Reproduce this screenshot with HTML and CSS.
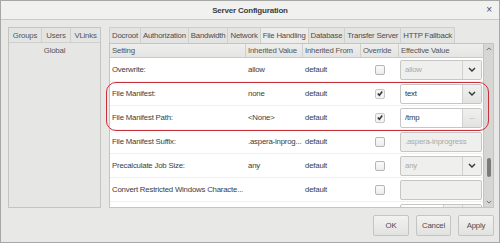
FILE: index.html
```html
<!DOCTYPE html>
<html lang="en">
<head>
    <meta charset="UTF-8">
    <title>Server Configuration</title>
    <link rel="stylesheet" href="styles.css">
</head>
<body>
    <div class="window">
        <div class="titlebar">
            <span class="title">Server Configuration</span>
            <span class="close">&times;</span>
        </div>

        <div class="content">
            <div class="users-panel">
                <div class="users-head">
                    <span class="uh-groups">Groups</span>
                    <span class="uh-users">Users</span>
                    <span class="uh-vlinks">VLinks</span>
                </div>
                <div class="users-item">Global</div>
            </div>

            <div class="settings">
                <div class="tabs">
                    <span class="tab">Docroot</span>
                    <span class="tab">Authorization</span>
                    <span class="tab">Bandwidth</span>
                    <span class="tab">Network</span>
                    <span class="tab active">File Handling</span>
                    <span class="tab">Database</span>
                    <span class="tab">Transfer Server</span>
                    <span class="tab">HTTP Fallback</span>
                </div>

                <div class="table-wrap">
                    <div class="table">
                        <div class="row head">
                            <span>Setting</span>
                            <span>Inherited Value</span>
                            <span>Inherited From</span>
                            <span>Override</span>
                            <span>Effective Value</span>
                        </div>

                        <div class="body">
                            <div class="row">
                                <span>Overwrite:</span>
                                <span>allow</span>
                                <span>default</span>
                                <span class="check"><i class="box"></i></span>
                                <span class="value">
                                    <span class="combo disabled"><span class="field">allow</span><span class="drop"><svg viewBox="0 0 8 5"><path d="M1 1l3 3 3-3"/></svg></span></span>
                                </span>
                            </div>
                            <div class="row">
                                <span>File Manifest:</span>
                                <span>none</span>
                                <span>default</span>
                                <span class="check"><i class="box on"><svg viewBox="0 0 10 10"><path d="M2.2 5l2 2.2L7.8 2.6"/></svg></i></span>
                                <span class="value">
                                    <span class="combo"><span class="field">text</span><span class="drop"><svg viewBox="0 0 8 5"><path d="M1 1l3 3 3-3"/></svg></span></span>
                                </span>
                            </div>
                            <div class="row">
                                <span>File Manifest Path:</span>
                                <span>&lt;None&gt;</span>
                                <span>default</span>
                                <span class="check"><i class="box on"><svg viewBox="0 0 10 10"><path d="M2.2 5l2 2.2L7.8 2.6"/></svg></i></span>
                                <span class="value">
                                    <span class="combo"><span class="field">/tmp</span><span class="drop browse">...</span></span>
                                </span>
                            </div>
                            <div class="row">
                                <span>File Manifest Suffix:</span>
                                <span>.aspera-inprog...</span>
                                <span>default</span>
                                <span class="check"><i class="box"></i></span>
                                <span class="value">
                                    <span class="combo disabled"><span class="field">.aspera-inprogress</span></span>
                                </span>
                            </div>
                            <div class="row">
                                <span>Precalculate Job Size:</span>
                                <span>any</span>
                                <span>default</span>
                                <span class="check"><i class="box"></i></span>
                                <span class="value">
                                    <span class="combo disabled"><span class="field">any</span><span class="drop"><svg viewBox="0 0 8 5"><path d="M1 1l3 3 3-3"/></svg></span></span>
                                </span>
                            </div>
                            <div class="row">
                                <span>Convert Restricted Windows Characte...</span>
                                <span></span>
                                <span>default</span>
                                <span class="check"><i class="box"></i></span>
                                <span class="value">
                                    <span class="combo disabled"><span class="field"></span></span>
                                </span>
                            </div>
                            <div class="row">
                                <span></span>
                                <span></span>
                                <span></span>
                                <span></span>
                                <span class="value">
                                    <span class="combo"><span class="field"></span><span class="drop"></span><span class="drop"></span></span>
                                </span>
                            </div>
                        </div>
                    </div>

                    <div class="scrollbar">
                        <span class="arrow"><svg viewBox="0 0 8 5"><path d="M1 4l3-3 3 3"/></svg></span>
                        <span class="track"><span class="thumb"></span></span>
                        <span class="arrow"><svg viewBox="0 0 8 5"><path d="M1 1l3 3 3-3"/></svg></span>
                    </div>

                    <div class="highlight"></div>
                </div>
            </div>
        </div>

        <div class="buttons">
            <button class="btn ok">OK</button>
            <button class="btn">Cancel</button>
            <button class="btn">Apply</button>
        </div>
    </div>
</body>
</html>
```

FILE: styles.css
```css
* {
    margin: 0;
    padding: 0;
    box-sizing: border-box;
}

body {
    font-family: "Liberation Sans", Arial, sans-serif;
    font-size: 7.8px;
    letter-spacing: -0.2px;
    color: #3a3d3e;
    background: #e8e8e7;
}

.window {
    width: 500px;
    height: 243px;
    border: 1px solid #a7a7a5;
    background: #e8e8e7;
    display: flex;
    flex-direction: column;
    overflow: hidden;
}

.titlebar {
    height: 19px;
    flex: none;
    background: #f1f1f0;
    border-bottom: 1px solid #c9c9c7;
    display: flex;
    align-items: center;
    justify-content: center;
    position: relative;
}

.title {
    font-size: 8px;
    font-weight: bold;
    color: #3b3e3f;
}

.close {
    position: absolute;
    right: 7px;
    top: 3px;
    font-size: 10px;
    color: #4a4d4e;
}

.content {
    display: flex;
    gap: 8px;
    padding: 7px 5px 0 7px;
    height: 188px;
    flex: none;
}

.users-panel {
    width: 93px;
    border: 1px solid #c4c4c2;
    background: #e6e6e5;
    display: flex;
    flex-direction: column;
}

.users-head {
    display: flex;
    height: 15px;
    border-bottom: 1px solid #cfcfcd;
    background: #e4e4e3;
}

.users-head span {
    display: flex;
    align-items: center;
    justify-content: center;
    color: #555;
    border-right: 1px solid #cfcfcd;
}

.uh-groups { width: 33px; }
.uh-users { width: 29px; }
.uh-vlinks { width: 29px; border-right: none !important; }

.users-item {
    text-align: center;
    color: #555;
    padding-top: 3px;
}

.settings {
    flex: 1;
    display: flex;
    flex-direction: column;
    min-width: 0;
}

.tabs {
    display: flex;
    height: 16px;
    flex: none;
}

.tab {
    display: flex;
    align-items: center;
    padding: 0 2px;
    white-space: nowrap;
    border: 1px solid #cfcfcd;
    border-right: none;
    border-bottom: none;
    background: #e3e3e2;
    color: #4a4d4e;
}

.tab:last-child {
    border-right: 1px solid #cfcfcd;
}

.tab.active {
    background: #ececeb;
}

.table-wrap {
    height: 165px;
    flex: none;
    display: flex;
    border: 1px solid #c4c4c2;
    position: relative;
}

.table {
    flex: 1;
    display: flex;
    flex-direction: column;
    background: #fff;
    overflow: hidden;
    min-height: 0;
}

.row {
    display: grid;
    grid-template-columns: 136px 57px 58px 38px 84px;
    height: 24px;
    flex: none;
    border-bottom: 1px solid #f0f0f0;
}

.row > span {
    display: flex;
    align-items: center;
    padding-left: 2px;
    white-space: nowrap;
    overflow: hidden;
}

.row.head {
    height: 14px;
    background: linear-gradient(#eeeeed, #e4e4e3);
    border-bottom: 1px solid #c9c9c7;
}

.row.head > span {
    border-right: 1px solid #cfcfcd;
    color: #555;
}

.row.head > span:last-child {
    border-right: none;
}

.body {
    flex: 1;
    min-height: 0;
    overflow: hidden;
}

.row > .check {
    justify-content: center;
    padding-left: 0;
}

.box {
    width: 10px;
    height: 10px;
    border: 1px solid #b5b5b3;
    border-radius: 2px;
    background: linear-gradient(#fbfbfb, #ededec);
    display: flex;
    align-items: center;
    justify-content: center;
}

.box.on {
    border-color: #c8c8c6;
    background: #f3f3f2;
}

.box svg {
    width: 9px;
    height: 9px;
    fill: none;
    stroke: #2e3436;
    stroke-width: 1.9;
}

.row > .value {
    padding: 0 1px 0 1px;
}

.combo {
    display: flex;
    width: 82px;
    height: 20px;
    border: 1px solid #c6c6c4;
    border-radius: 2px;
    background: #fff;
}

.field {
    flex: 1;
    display: flex;
    align-items: center;
    padding-left: 4px;
    color: #2e3436;
}

.combo.disabled {
    background: #efefee;
}

.combo.disabled .field {
    color: #a9aaa8;
}

.drop {
    width: 19px;
    flex: none;
    display: flex;
    align-items: center;
    justify-content: center;
    border-left: 1px solid #d0d0ce;
    background: linear-gradient(#f0f0ef, #e3e3e2);
    color: #999;
}

.combo.disabled .drop {
    background: #efefee;
}

.drop.browse {
    font-size: 7px;
    padding-bottom: 2px;
}

.drop svg {
    width: 8px;
    height: 5px;
    fill: none;
    stroke: #2e3436;
    stroke-width: 1.4;
}

.scrollbar {
    width: 10px;
    flex: none;
    background: #d6d6d5;
    border-left: 1px solid #c4c4c2;
    display: flex;
    flex-direction: column;
}

.arrow {
    height: 10px;
    flex: none;
    display: flex;
    align-items: center;
    justify-content: center;
}

.arrow svg {
    width: 6px;
    height: 4px;
    fill: none;
    stroke: #666;
    stroke-width: 1.2;
}

.track {
    flex: 1;
    display: flex;
    justify-content: center;
}

.thumb {
    width: 4px;
    height: 19px;
    margin-top: 104px;
    border-radius: 2px;
    background: #7b7b7a;
}

.highlight {
    position: absolute;
    left: -4px;
    top: 38px;
    width: 383px;
    height: 49px;
    border: 1.5px solid #c5313b;
    border-radius: 10px;
    pointer-events: none;
}

.buttons {
    display: flex;
    justify-content: flex-end;
    gap: 7px;
    padding: 7px 5px 0 0;
}

.btn {
    font-family: inherit;
    font-size: 7.8px;
    letter-spacing: -0.2px;
    color: #4a4d4e;
    height: 21px;
    border: 1px solid #c4c4c2;
    border-radius: 2px;
    background: linear-gradient(#f2f2f1, #e2e2e1);
}

.btn.ok {
    width: 36px;
}

.btn:nth-child(2) {
    width: 35px;
}

.btn:nth-child(3) {
    width: 36px;
}
```
